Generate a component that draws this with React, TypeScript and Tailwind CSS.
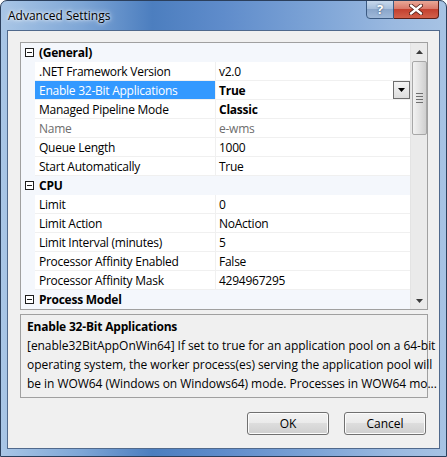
import React from "react";

type Row =
  | { kind: "cat"; label: string }
  | { kind: "prop"; name: string; value: string; bold?: boolean; dim?: boolean; selected?: boolean };

const rows: Row[] = [
  { kind: "cat", label: "(General)" },
  { kind: "prop", name: ".NET Framework Version", value: "v2.0" },
  { kind: "prop", name: "Enable 32-Bit Applications", value: "True", bold: true, selected: true },
  { kind: "prop", name: "Managed Pipeline Mode", value: "Classic", bold: true },
  { kind: "prop", name: "Name", value: "e-wms", dim: true },
  { kind: "prop", name: "Queue Length", value: "1000" },
  { kind: "prop", name: "Start Automatically", value: "True" },
  { kind: "cat", label: "CPU" },
  { kind: "prop", name: "Limit", value: "0" },
  { kind: "prop", name: "Limit Action", value: "NoAction" },
  { kind: "prop", name: "Limit Interval (minutes)", value: "5" },
  { kind: "prop", name: "Processor Affinity Enabled", value: "False" },
  { kind: "prop", name: "Processor Affinity Mask", value: "4294967295" },
  { kind: "cat", label: "Process Model" },
];

function MinusBox() {
  return (
    <span className="flex h-[9px] w-[9px] items-center justify-center border border-[#1e1e1e] bg-white">
      <span className="h-px w-[5px] bg-[#1e1e1e]" />
    </span>
  );
}

function GridRow({ row }: { row: Row }) {
  if (row.kind === "cat") {
    return (
      <div className="flex h-[19px] items-center bg-[#f4f7fc]">
        <div className="flex w-[14px] justify-center pl-[2px]">
          <MinusBox />
        </div>
        <span className="pl-[4px] pt-px font-bold text-black">{row.label}</span>
      </div>
    );
  }
  return (
    <div className="flex h-[19px] bg-[#f4f7fc]">
      <div className="w-[14px]" />
      <div className="flex flex-1 border-b border-[#f0f0f0] bg-white">
        <div
          className={
            row.selected
              ? "flex w-[180px] items-center bg-[#3399ff] pl-[4px] pt-px text-white"
              : row.dim
              ? "flex w-[180px] items-center pl-[4px] pt-px text-[#6d6d6d]"
              : "flex w-[180px] items-center pl-[4px] pt-px text-black"
          }
        >
          {row.name}
        </div>
        <div className="w-px bg-[#f0f0f0]" />
        <div
          className={
            "flex flex-1 items-center pl-[3px] pt-px " +
            (row.bold ? "font-bold text-black " : "") +
            (row.dim ? "text-[#6d6d6d]" : "text-black")
          }
        >
          {row.value}
        </div>
        {row.selected && (
          <div className="flex w-[17px] items-center justify-center border border-[#6d6d6d] bg-[linear-gradient(#f4f4f4,#dcdcdc)]">
            <svg width="7" height="4" viewBox="0 0 7 4">
              <path d="M0 0H7L3.5 4Z" fill="#000" />
            </svg>
          </div>
        )}
      </div>
    </div>
  );
}

function Scrollbar() {
  return (
    <div className="flex w-[17px] flex-col items-center border-l border-[#e3e3e3] bg-[#eaeaea]">
      <div className="flex h-[17px] w-full items-center justify-center">
        <svg width="7" height="4" viewBox="0 0 7 4">
          <path d="M3.5 0L7 4H0Z" fill="#3c3c3c" />
        </svg>
      </div>
      <div className="mt-px flex h-[74px] w-[15px] items-center justify-center rounded-[2px] border border-[#a7a7a7] bg-[linear-gradient(to_right,#f2f2f2,#e2e2e2_50%,#cfcfcf)]">
        <div className="flex flex-col gap-[2px]">
          <span className="h-px w-[7px] bg-[#6f6f6f]" />
          <span className="h-px w-[7px] bg-[#6f6f6f]" />
          <span className="h-px w-[7px] bg-[#6f6f6f]" />
          <span className="h-px w-[7px] bg-[#6f6f6f]" />
        </div>
      </div>
      <div className="flex-1" />
      <div className="flex h-[17px] w-full items-center justify-center">
        <svg width="7" height="4" viewBox="0 0 7 4">
          <path d="M0 0H7L3.5 4Z" fill="#3c3c3c" />
        </svg>
      </div>
    </div>
  );
}

function Button({ label }: { label: string }) {
  return (
    <button className="flex h-[23px] w-[82px] items-center justify-center rounded-[3px] border border-[#707070] bg-[linear-gradient(#f2f2f2,#ebebeb_45%,#dddddd_50%,#cfcfcf)] text-black shadow-[inset_0_0_0_1px_#fcfcfc]">
      {label}
    </button>
  );
}

export default function App() {
  return (
    <div className="h-[457px] w-[447px] overflow-hidden rounded-t-[7px] border border-[#2b3f5c] bg-[linear-gradient(to_right,#a9c6e6_0%,#7ea6d6_18%,#4c7ebf_34%,#5f8ccb_50%,#7ca3d6_70%,#9ab9e0_88%,#a7c3e4_100%)] font-['Open_Sans',sans-serif] text-[12px] leading-none">
      <div className="flex h-[29px] items-start">
        <div className="pl-[7px] pt-[9px] text-[12px] text-black [text-shadow:0_0_6px_#ffffff,0_0_3px_#ffffff]">
          Advanced Settings
        </div>
        <div className="flex-1" />
        <div className="mr-[7px] flex h-[19px] -mt-px">
          <div className="flex w-[28px] items-center justify-center rounded-bl-[4px] border border-[#3b5a82] bg-[linear-gradient(#c7d8ec,#a7bfdc_45%,#8aa6cb_50%,#9fb9d9)] font-bold text-[13px] text-white [text-shadow:0_0_2px_#263f60]">
            ?
          </div>
          <div className="flex w-[45px] items-center justify-center rounded-br-[4px] border border-l-0 border-[#5a1e16] bg-[linear-gradient(#e9a897,#d9796a_45%,#c4412f_50%,#d2604a)]">
            <svg width="14" height="11" viewBox="0 0 14 11">
              <path d="M2 1.5L12 9.5M12 1.5L2 9.5" stroke="#4b1a12" strokeWidth="4" strokeLinecap="round" />
              <path d="M2 1.5L12 9.5M12 1.5L2 9.5" stroke="#ffffff" strokeWidth="2.4" strokeLinecap="round" />
            </svg>
          </div>
        </div>
      </div>
      <div className="ml-[6px] mr-[6px] flex h-[419px] flex-col border border-[#50698c] bg-[#f0f0f0] pl-[12px] pr-[11px] pt-[11px]">
        <div className="flex h-[268px] border border-[#a0a0a0] bg-white tracking-[-0.25px]">
          <div className="flex-1 overflow-hidden">
            {rows.map((r, i) => (
              <GridRow key={i} row={r} />
            ))}
          </div>
          <Scrollbar />
        </div>
        <div className="mt-[4px] h-[84px] border border-[#a0a0a0] px-[6px] pt-[2px] leading-[19px] tracking-[-0.05px] text-black">
          <div className="font-bold tracking-[-0.2px]">Enable 32-Bit Applications</div>
          <div className="whitespace-nowrap">[enable32BitAppOnWin64] If set to true for an application pool on a 64-bit</div>
          <div className="whitespace-nowrap">operating system, the worker process(es) serving the application pool will</div>
          <div className="whitespace-nowrap">be in WOW64 (Windows on Windows64) mode. Processes in WOW64 mo...</div>
        </div>
        <div className="mt-[14px] flex justify-end gap-[15px] pr-[2px]">
          <Button label="OK" />
          <Button label="Cancel" />
        </div>
      </div>
    </div>
  );
}
